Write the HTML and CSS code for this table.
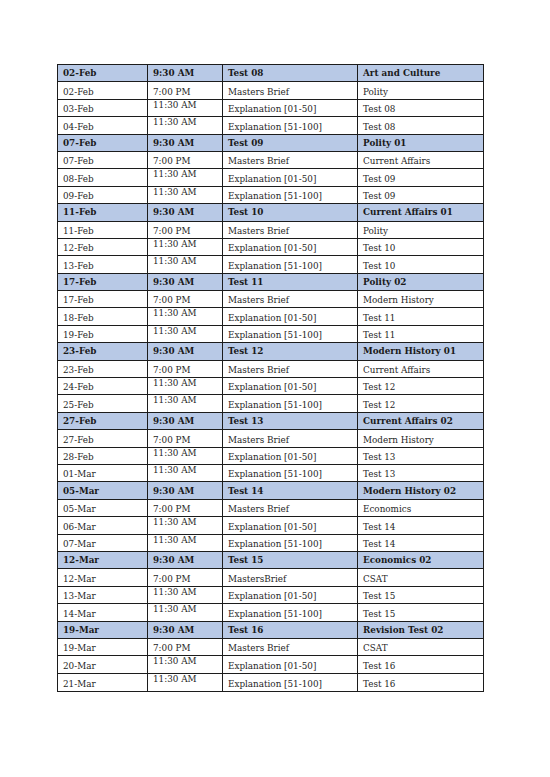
FILE: index.html
```html
<!DOCTYPE html>
<html>
<head>
<meta charset="utf-8">
<link rel="stylesheet" href="styles.css">
</head>
<body>
<div class="page">
<table class="sched">
<colgroup><col class="c1"><col class="c2"><col class="c3"><col class="c4"></colgroup>
<tbody>
<tr class="hd"><td>02-Feb</td><td>9:30 AM</td><td>Test 08</td><td>Art and Culture</td></tr>
<tr><td>02-Feb</td><td>7:00 PM</td><td>Masters Brief</td><td>Polity</td></tr>
<tr class="ex"><td>03-Feb</td><td class="t">11:30 AM</td><td>Explanation [01-50]</td><td>Test 08</td></tr>
<tr class="ex"><td>04-Feb</td><td class="t">11:30 AM</td><td>Explanation [51-100]</td><td>Test 08</td></tr>
<tr class="hd"><td>07-Feb</td><td>9:30 AM</td><td>Test 09</td><td>Polity 01</td></tr>
<tr><td>07-Feb</td><td>7:00 PM</td><td>Masters Brief</td><td>Current Affairs</td></tr>
<tr class="ex"><td>08-Feb</td><td class="t">11:30 AM</td><td>Explanation [01-50]</td><td>Test 09</td></tr>
<tr class="ex"><td>09-Feb</td><td class="t">11:30 AM</td><td>Explanation [51-100]</td><td>Test 09</td></tr>
<tr class="hd"><td>11-Feb</td><td>9:30 AM</td><td>Test 10</td><td>Current Affairs 01</td></tr>
<tr><td>11-Feb</td><td>7:00 PM</td><td>Masters Brief</td><td>Polity</td></tr>
<tr class="ex"><td>12-Feb</td><td class="t">11:30 AM</td><td>Explanation [01-50]</td><td>Test 10</td></tr>
<tr class="ex"><td>13-Feb</td><td class="t">11:30 AM</td><td>Explanation [51-100]</td><td>Test 10</td></tr>
<tr class="hd"><td>17-Feb</td><td>9:30 AM</td><td>Test 11</td><td>Polity 02</td></tr>
<tr><td>17-Feb</td><td>7:00 PM</td><td>Masters Brief</td><td>Modern History</td></tr>
<tr class="ex"><td>18-Feb</td><td class="t">11:30 AM</td><td>Explanation [01-50]</td><td>Test 11</td></tr>
<tr class="ex"><td>19-Feb</td><td class="t">11:30 AM</td><td>Explanation [51-100]</td><td>Test 11</td></tr>
<tr class="hd"><td>23-Feb</td><td>9:30 AM</td><td>Test 12</td><td>Modern History 01</td></tr>
<tr><td>23-Feb</td><td>7:00 PM</td><td>Masters Brief</td><td>Current Affairs</td></tr>
<tr class="ex"><td>24-Feb</td><td class="t">11:30 AM</td><td>Explanation [01-50]</td><td>Test 12</td></tr>
<tr class="ex"><td>25-Feb</td><td class="t">11:30 AM</td><td>Explanation [51-100]</td><td>Test 12</td></tr>
<tr class="hd"><td>27-Feb</td><td>9:30 AM</td><td>Test 13</td><td>Current Affairs 02</td></tr>
<tr><td>27-Feb</td><td>7:00 PM</td><td>Masters Brief</td><td>Modern History</td></tr>
<tr class="ex"><td>28-Feb</td><td class="t">11:30 AM</td><td>Explanation [01-50]</td><td>Test 13</td></tr>
<tr class="ex"><td>01-Mar</td><td class="t">11:30 AM</td><td>Explanation [51-100]</td><td>Test 13</td></tr>
<tr class="hd"><td>05-Mar</td><td>9:30 AM</td><td>Test 14</td><td>Modern History 02</td></tr>
<tr><td>05-Mar</td><td>7:00 PM</td><td>Masters Brief</td><td>Economics</td></tr>
<tr class="ex"><td>06-Mar</td><td class="t">11:30 AM</td><td>Explanation [01-50]</td><td>Test 14</td></tr>
<tr class="ex"><td>07-Mar</td><td class="t">11:30 AM</td><td>Explanation [51-100]</td><td>Test 14</td></tr>
<tr class="hd"><td>12-Mar</td><td>9:30 AM</td><td>Test 15</td><td>Economics 02</td></tr>
<tr><td>12-Mar</td><td>7:00 PM</td><td>MastersBrief</td><td>CSAT</td></tr>
<tr class="ex"><td>13-Mar</td><td class="t">11:30 AM</td><td>Explanation [01-50]</td><td>Test 15</td></tr>
<tr class="ex"><td>14-Mar</td><td class="t">11:30 AM</td><td>Explanation [51-100]</td><td>Test 15</td></tr>
<tr class="hd"><td>19-Mar</td><td>9:30 AM</td><td>Test 16</td><td>Revision Test 02</td></tr>
<tr><td>19-Mar</td><td>7:00 PM</td><td>Masters Brief</td><td>CSAT</td></tr>
<tr class="ex"><td>20-Mar</td><td class="t">11:30 AM</td><td>Explanation [01-50]</td><td>Test 16</td></tr>
<tr class="ex last"><td>21-Mar</td><td class="t">11:30 AM</td><td>Explanation [51-100]</td><td>Test 16</td></tr>
</tbody>
</table>
</div>
</body>
</html>
```

FILE: styles.css
```css
html, body {
  margin: 0;
  padding: 0;
  background: #ffffff;
}
.page {
  width: 550px;
  height: 777px;
  box-sizing: border-box;
  padding: 64px 0 0 57px;
}
.sched {
  border-collapse: collapse;
  table-layout: fixed;
  width: 426px;
  font-family: "DejaVu Serif", "Liberation Serif", serif;
  font-size: 8.8px;
  color: #262626;
}
.c1 { width: 90px; }
.c2 { width: 75px; }
.c3 { width: 135px; }
.c4 { width: 126px; }
.sched td {
  border: 1px solid #1c1c1c;
  height: 16.4px;
  padding: 0 0 0 5px;
  vertical-align: bottom;
  line-height: 14px;
  white-space: nowrap;
  overflow: hidden;
}
.sched tr.hd td {
  background: #b8c9e6;
  font-weight: bold;
  color: #1a1a1a;
  vertical-align: middle;
}
.sched td.t {
  vertical-align: top;
  line-height: 11px;
}
.sched tr.last td {
  height: 17.3px;
}
```
